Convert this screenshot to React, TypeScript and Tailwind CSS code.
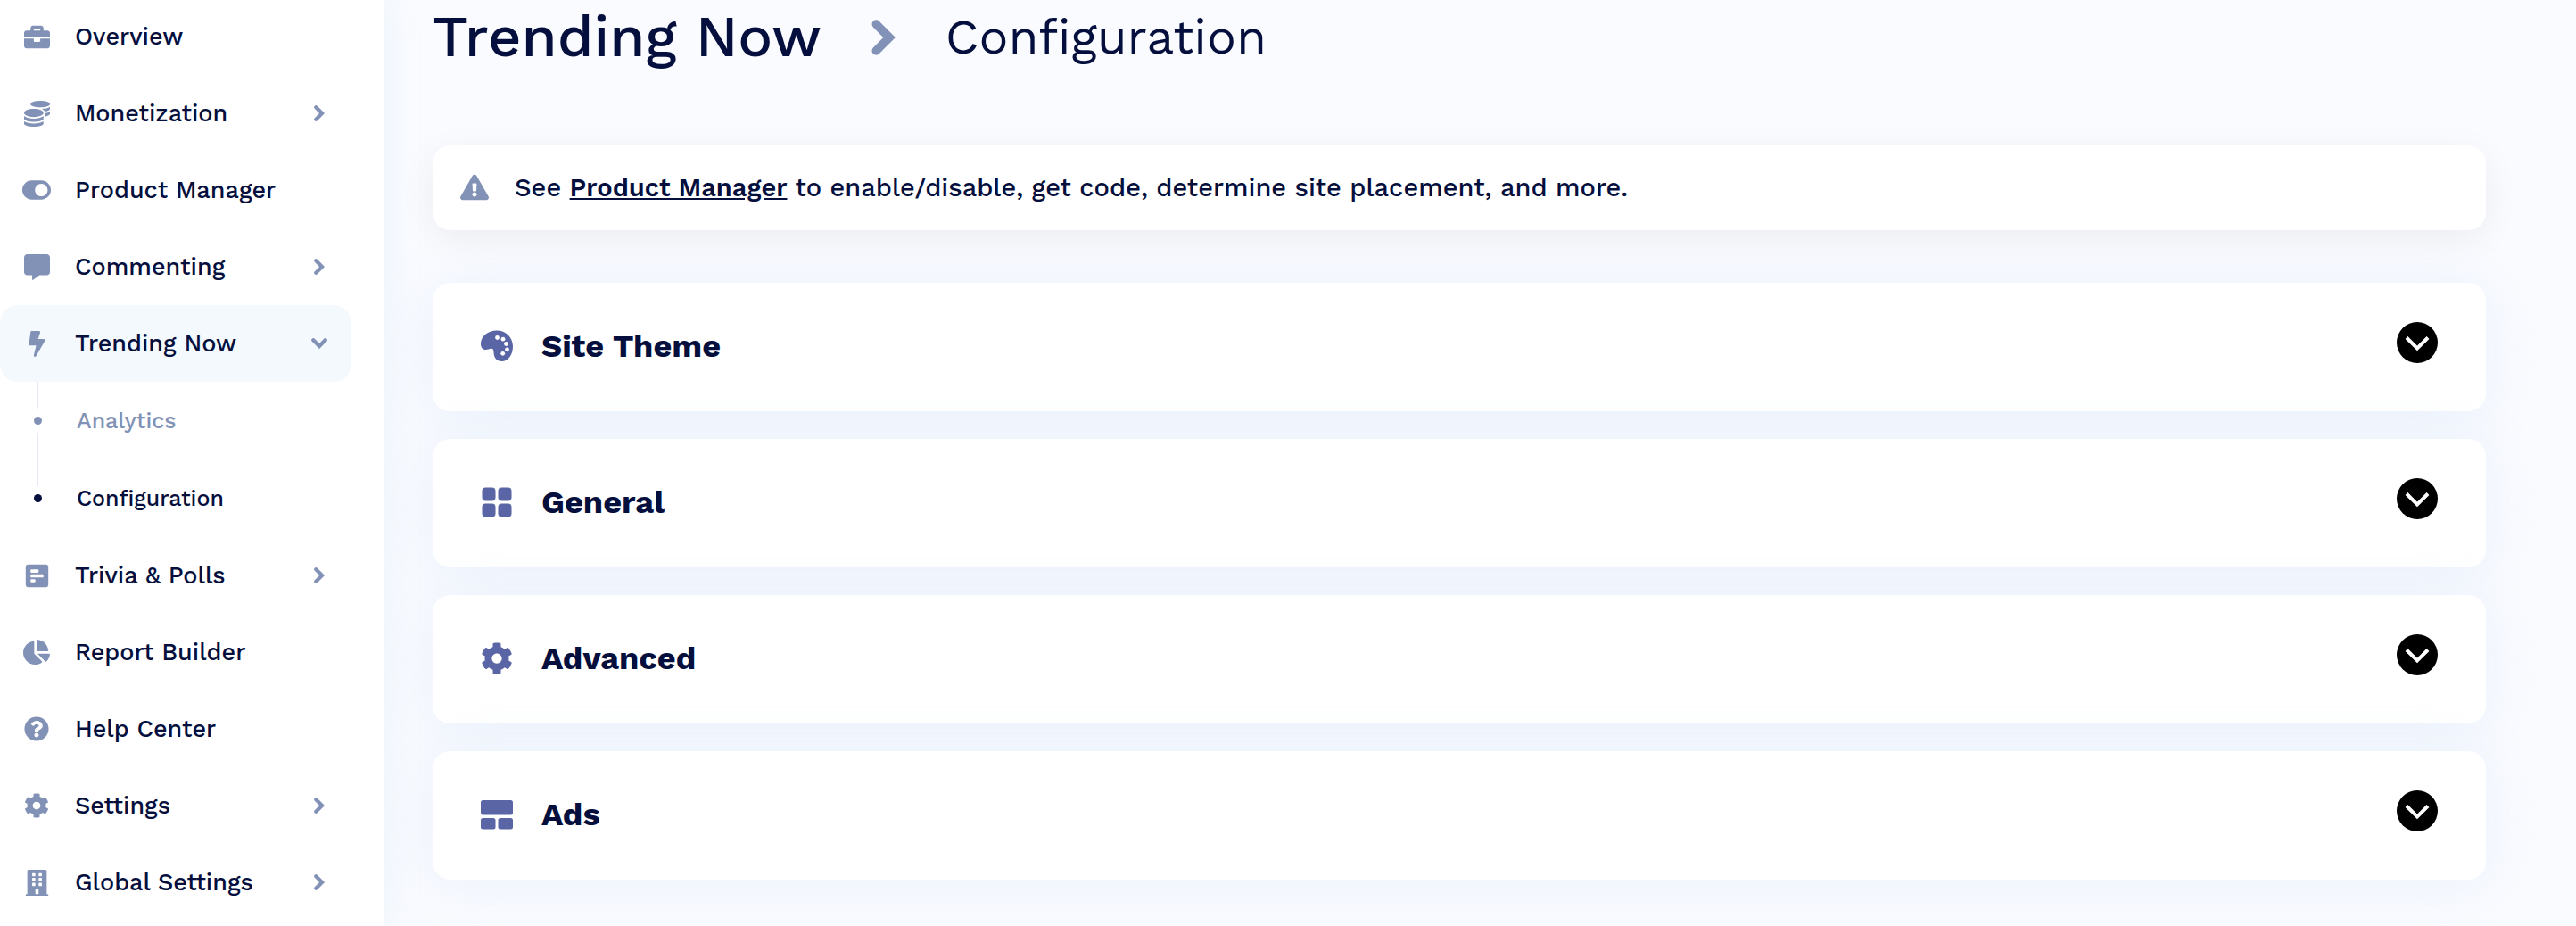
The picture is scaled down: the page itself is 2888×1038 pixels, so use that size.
import React, { useState } from 'react';
import {
  FaBolt,
  FaBriefcase,
  FaBuilding,
  FaChartPie,
  FaCog,
  FaCoins,
  FaCommentAlt,
  FaExclamationTriangle,
  FaPollH,
  FaQuestionCircle,
  FaToggleOn,
} from 'react-icons/fa';
import { IconType } from 'react-icons';

type NavItem = {
  label: string;
  icon: IconType;
  size: string;
  expandable?: boolean;
  children?: string[];
};

const navItems: NavItem[] = [
  { label: 'Overview', icon: FaBriefcase, size: 'size-[29px]' },
  { label: 'Monetization', icon: FaCoins, size: 'size-[29px]', expandable: true },
  { label: 'Product Manager', icon: FaToggleOn, size: 'size-8' },
  { label: 'Commenting', icon: FaCommentAlt, size: 'size-[29px]', expandable: true },
  {
    label: 'Trending Now',
    icon: FaBolt,
    size: 'size-[29px]',
    expandable: true,
    children: ['Analytics', 'Configuration'],
  },
  { label: 'Trivia & Polls', icon: FaPollH, size: 'size-[29px]', expandable: true },
  { label: 'Report Builder', icon: FaChartPie, size: 'size-[30px]' },
  { label: 'Help Center', icon: FaQuestionCircle, size: 'size-7' },
  { label: 'Settings', icon: FaCog, size: 'size-7', expandable: true },
  { label: 'Global Settings', icon: FaBuilding, size: 'size-[29px]', expandable: true },
];

const PaletteIcon = () => (
  <svg viewBox="0 0 36 36" className="size-9">
    <path
      d="M18 .5C28 .5 36 8 36 18.500 36 27.500 30.500 35 23.500 35 18 35 14.800 31 14.600 26 14.500 22.500 14 20.600 11.500 20.800 9.500 21 8 22 5.500 22 2 22 0 19.500 0 15.500 0 7 8 .5 18 .5Z"
      fill="currentColor"
    />
    <g fill="#fff">
      <circle cx="18.500" cy="8.500" r="2.400" />
      <circle cx="25" cy="10.200" r="2.400" />
      <circle cx="28.500" cy="15.500" r="2.400" />
      <circle cx="29.500" cy="21.800" r="2.400" />
      <circle cx="24.700" cy="26.300" r="2.400" />
    </g>
  </svg>
);

const GridIcon = () => (
  <svg viewBox="0 0 36 36" className="size-9" fill="currentColor">
    <rect x="1.500" y="1.500" width="15" height="15" rx="4" />
    <rect x="19.500" y="1.500" width="15" height="15" rx="4" />
    <rect x="1.500" y="19.500" width="15" height="15" rx="4" />
    <rect x="19.500" y="19.500" width="15" height="15" rx="4" />
  </svg>
);

const LayoutIcon = () => (
  <svg viewBox="0 0 36 36" className="size-9" fill="currentColor">
    <rect x="0" y="2" width="36" height="16.500" rx="2.500" />
    <rect x="0" y="22" width="16.500" height="12.500" rx="2.500" />
    <rect x="19.500" y="22" width="16.500" height="12.500" rx="2.500" />
  </svg>
);

const sections = [
  { title: 'Site Theme', icon: <PaletteIcon /> },
  { title: 'General', icon: <GridIcon /> },
  { title: 'Advanced', icon: <FaCog className="size-9" /> },
  { title: 'Ads', icon: <LayoutIcon /> },
];

const Chevron = ({ className }: { className: string }) => (
  <svg viewBox="0 0 12 18" className={className} fill="none" stroke="currentColor">
    <path d="M2.300 2.300L9 9l-6.700 6.700" strokeWidth="4.300" strokeLinecap="round" />
  </svg>
);

const Sidebar = () => (
  <aside className="relative z-10 w-[430px] shrink-0 bg-white shadow-[0_0_40px_rgba(225,240,250,0.7)]">
    <nav className="-mt-0.5 pr-9">
      <ul>
        {navItems.map(({ label, icon: Icon, size, expandable, children }) => (
          <li key={label}>
            <a
              href="#"
              className={`flex h-[86px] items-center rounded-[20px] pr-[30px] text-[27px] font-medium ${
                children ? 'bg-[#f4f9fe]' : ''
              }`}
            >
              <span className="flex w-[82px] justify-center text-[#8292b6]">
                <Icon className={size} />
              </span>
              <span className="grow pl-0.5">{label}</span>
              {expandable && (
                <Chevron className={`h-[18px] w-3 text-[#8292b6] ${children ? 'rotate-90' : ''}`} />
              )}
            </a>
            {children && (
              <ul>
                {children.map((child, i) => (
                  <li key={child}>
                    <a
                      href="#"
                      className={`flex h-[87px] text-[25px] font-medium ${i === 0 ? 'text-[#8292b6]' : ''}`}
                    >
                      <span className="flex w-[84px] flex-col items-center">
                        <span className="h-[30px] w-0.5 bg-[#e6eaf8]" />
                        <span className="my-[9px] size-[9px] rounded-full bg-current" />
                        {i === 0 && <span className="w-0.5 grow bg-[#e6eaf8]" />}
                      </span>
                      <span className="self-center pl-0.5">{child}</span>
                    </a>
                  </li>
                ))}
              </ul>
            )}
          </li>
        ))}
      </ul>
    </nav>
  </aside>
);

const Section = ({ title, icon }: { title: string; icon: React.ReactNode }) => {
  const [open, setOpen] = useState(false);

  return (
    <section className="rounded-[20px] bg-white shadow-[0_4px_60px_rgba(215,231,247,0.45)]">
      <h2>
        <button
          type="button"
          aria-expanded={open}
          onClick={() => setOpen(!open)}
          className="flex h-36 w-full items-center pr-[54px] pb-0.5 pl-[54px] text-left text-4xl font-bold"
        >
          <span className="text-[#5965a5]">{icon}</span>
          <span className="grow pl-8">{title}</span>
          <svg viewBox="0 0 46 46" className="mb-2 size-[46px]">
            <circle cx="23" cy="23" r="23" />
            <path d="M11 17.500l12 12 12-12" fill="none" stroke="#fff" strokeWidth="4" />
          </svg>
        </button>
      </h2>
    </section>
  );
};

export default function App() {
  return (
    <div className="flex min-h-screen bg-[#fafbff] font-['Work_Sans',Inter,sans-serif] text-[#050f3d]">
      <Sidebar />
      <main className="grow pr-[101px] pb-[52px] pl-[55px]">
        <div className="flex h-[163px] items-start">
          <h1 className="text-[65px] leading-[82px] font-medium">Trending Now</h1>
          <Chevron className="mx-14 mt-[22px] h-10 w-[27px] text-[#8292b6]" />
          <p className="text-[55px] leading-[82px]">Configuration</p>
        </div>

        <div className="flex h-[95px] items-center rounded-[20px] bg-white pl-[31px] text-[29px] font-medium shadow-[0_10px_40px_rgba(0,0,0,0.06)]">
          <FaExclamationTriangle className="mb-0.5 size-8 text-[#8292b6]" />
          <p className="pl-[29px]">
            See{' '}
            <a href="#" className="font-semibold underline">
              Product Manager
            </a>{' '}
            to enable/disable, get code, determine site placement, and more.
          </p>
        </div>

        <div className="mt-[59px] flex flex-col gap-[31px]">
          {sections.map((section) => (
            <Section key={section.title} {...section} />
          ))}
        </div>
      </main>
    </div>
  );
}
